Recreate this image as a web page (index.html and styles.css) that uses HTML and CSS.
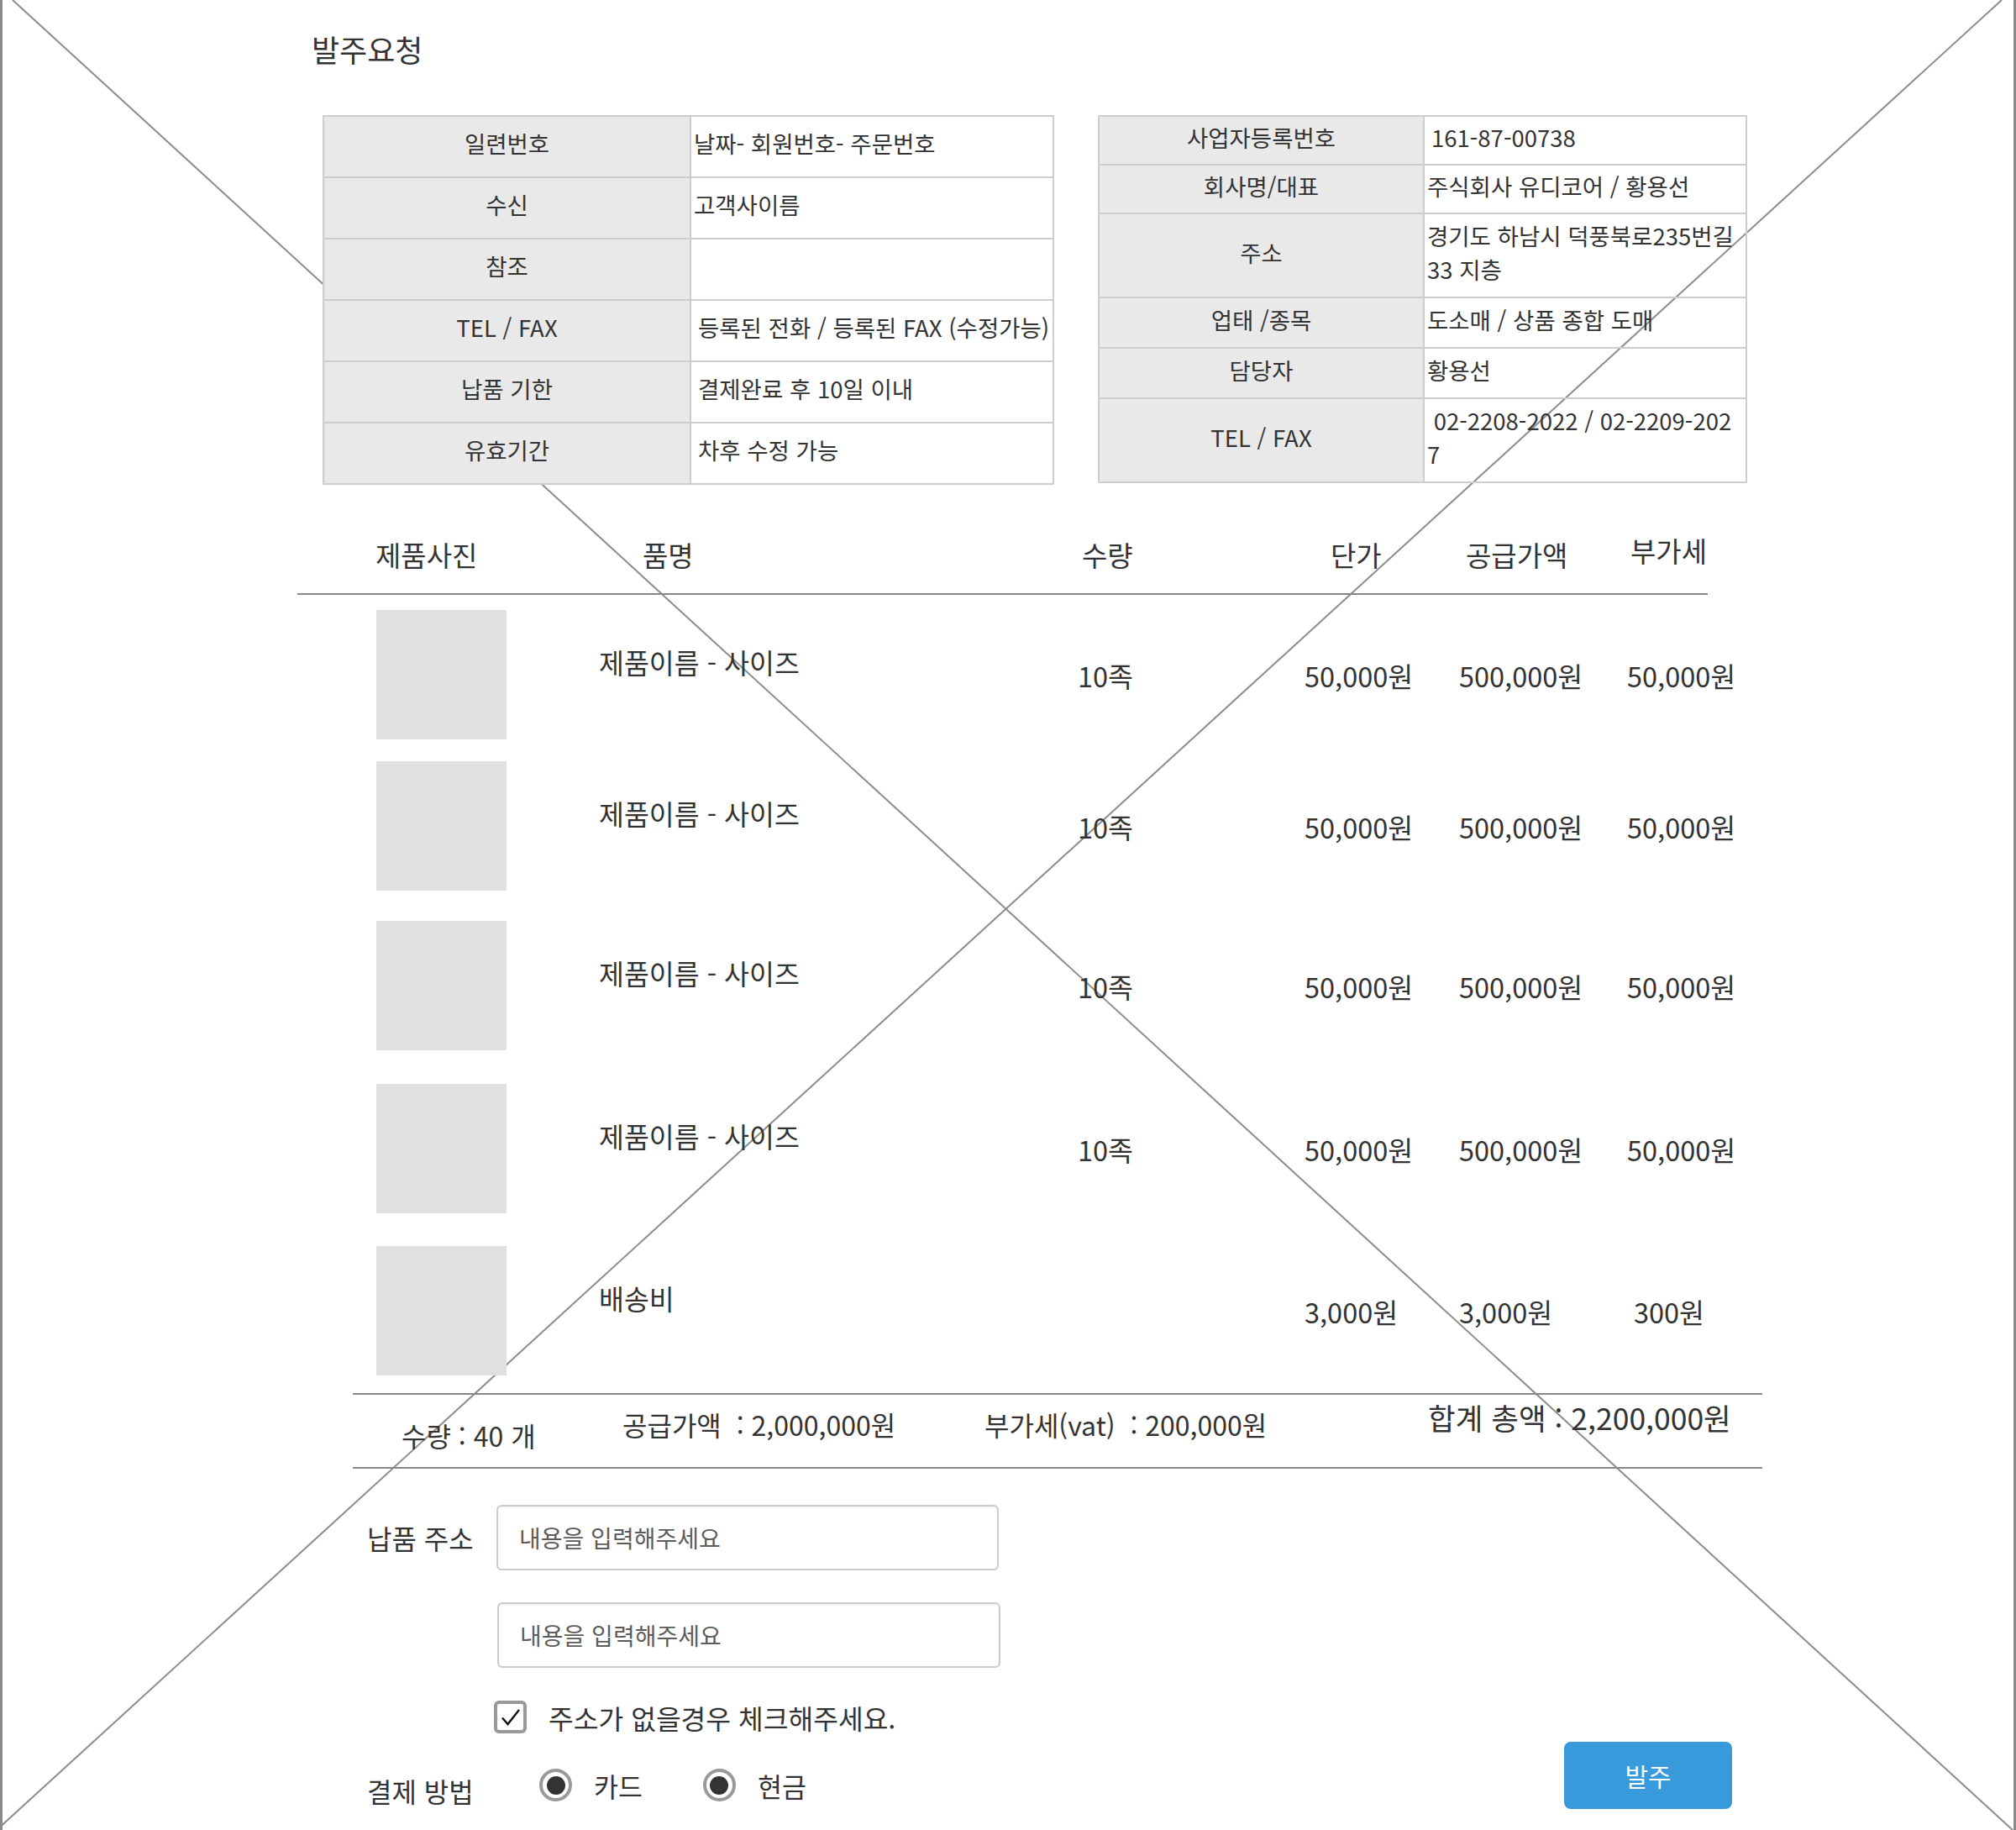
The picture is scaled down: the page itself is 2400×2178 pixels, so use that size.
FILE: index.html
```html
<!DOCTYPE html>
<html lang="ko">
<head>
<meta charset="utf-8">
<title>발주요청</title>
<link rel="stylesheet" href="styles.css">
</head>
<body>
<div class="page">
  <svg class="xmark" width="2400" height="2178" viewBox="0 0 2400 2178" aria-hidden="true">
    <line x1="15" y1="0" x2="2396" y2="2178"/>
    <line x1="2383" y1="0" x2="-4" y2="2178"/>
  </svg>
  <main class="content">
    <h1 class="title">발주요청</h1>

    <section class="info">
      <div class="info-table info-left">
        <div class="th">일련번호</div><div class="td">날짜- 회원번호- 주문번호</div>
        <div class="th">수신</div><div class="td">고객사이름</div>
        <div class="th">참조</div><div class="td"></div>
        <div class="th">TEL / FAX</div><div class="td sp">등록된 전화 / 등록된 FAX (수정가능)</div>
        <div class="th">납품 기한</div><div class="td sp">결제완료 후 10일 이내</div>
        <div class="th">유효기간</div><div class="td sp">차후 수정 가능</div>
      </div>
      <div class="info-table info-right">
        <div class="th">사업자등록번호</div><div class="td sp">161-87-00738</div>
        <div class="th">회사명/대표</div><div class="td">주식회사 유디코어 / 황용선</div>
        <div class="th">주소</div><div class="td">경기도 하남시 덕풍북로235번길 33 지층</div>
        <div class="th">업태 /종목</div><div class="td">도소매 / 상품 종합 도매</div>
        <div class="th">담당자</div><div class="td">황용선</div>
        <div class="th">TEL / FAX</div><div class="td wrap">&nbsp;02-2208-2022 / 02-2209-2027</div>
      </div>
    </section>

    <section class="products">
      <div class="prod-head">
        <div>제품사진</div>
        <div>품명</div>
        <div>수량</div>
        <div>단가</div>
        <div>공급가액</div>
        <div class="head-vat">부가세</div>
      </div>
      <div class="prod-row">
        <div class="thumb"></div>
        <div class="name">제품이름 - 사이즈</div>
        <div>10족</div>
        <div>50,000원</div>
        <div>500,000원</div>
        <div>50,000원</div>
      </div>
      <div class="prod-row">
        <div class="thumb"></div>
        <div class="name">제품이름 - 사이즈</div>
        <div>10족</div>
        <div>50,000원</div>
        <div>500,000원</div>
        <div>50,000원</div>
      </div>
      <div class="prod-row">
        <div class="thumb"></div>
        <div class="name">제품이름 - 사이즈</div>
        <div>10족</div>
        <div>50,000원</div>
        <div>500,000원</div>
        <div>50,000원</div>
      </div>
      <div class="prod-row">
        <div class="thumb"></div>
        <div class="name">제품이름 - 사이즈</div>
        <div>10족</div>
        <div>50,000원</div>
        <div>500,000원</div>
        <div>50,000원</div>
      </div>
      <div class="prod-row">
        <div class="thumb"></div>
        <div class="name">배송비</div>
        <div></div>
        <div>3,000원</div>
        <div>3,000원</div>
        <div class="indent">300원</div>
      </div>
    </section>

    <section class="summary">
      <div class="sum-qty">수량 : 40 개</div>
      <div class="sum-mid">공급가액&nbsp; : 2,000,000원</div>
      <div class="sum-mid">부가세(vat)&nbsp; : 200,000원</div>
      <div class="sum-total">합계 총액 : 2,200,000원</div>
    </section>

    <section class="order">
      <form class="order-form" onsubmit="return false">
        <div class="form-row">
          <span class="form-label">납품 주소</span>
          <input class="field" type="text" placeholder="내용을 입력해주세요">
        </div>
        <div class="form-row row-addr2">
          <span class="form-label"></span>
          <input class="field field-2" type="text" placeholder="내용을 입력해주세요">
        </div>
        <div class="form-row row-check">
          <span class="form-label"></span>
          <label class="check">
            <span class="check-box">
              <svg width="24" height="22" viewBox="0 0 24 22" aria-hidden="true"><path d="M2 11.5 L8.5 19 L22 2"/></svg>
            </span>
            주소가 없을경우 체크해주세요.
          </label>
        </div>
        <div class="form-row row-pay">
          <span class="form-label label-pay">결제 방법</span>
          <label class="radio first"><span class="radio-dot"></span>카드</label>
          <label class="radio"><span class="radio-dot"></span>현금</label>
        </div>
      </form>
      <button class="submit" type="button">발주</button>
    </section>
  </main>
</div>
</body>
</html>
```

FILE: styles.css
```css
* {
  box-sizing: border-box;
}

html, body {
  margin: 0;
  padding: 0;
  background: #fff;
}

body {
  font-family: "Noto Sans CJK KR", "Noto Sans", sans-serif;
  color: #333;
}

.page {
  position: relative;
  width: 2400px;
  height: 2178px;
  overflow: hidden;
  background: #fff;
  box-shadow: inset 3px 0 0 #8a8a8a, inset -3px 0 0 #8a8a8a;
}

.xmark {
  position: absolute;
  left: 0;
  top: 0;
}

.xmark line {
  stroke: #8c8c8c;
  stroke-width: 2;
}

.content {
  position: relative;
  padding-top: 40px;
}

.title {
  margin: 0 0 0 371px;
  font-size: 36px;
  font-weight: 400;
  line-height: 36px;
}

/* info tables */
.info {
  display: flex;
  align-items: flex-start;
  gap: 52px;
  margin: 61px 0 0 384px;
}

.info-table {
  display: grid;
  border-top: 2px solid #cdcdcd;
  border-left: 2px solid #cdcdcd;
  font-size: 27.5px;
}

.info-left {
  grid-template-columns: 437px 432px;
  grid-template-rows: repeat(6, 73px);
}

.info-right {
  grid-template-columns: 387px 384px;
  grid-template-rows: 58px 58px 100px 60px 60px 100px;
}

.th,
.td {
  display: flex;
  align-items: center;
  border-right: 2px solid #cdcdcd;
  border-bottom: 2px solid #cdcdcd;
}

.info-left .th,
.info-left .td {
  padding-bottom: 10px;
}

.info-right .th,
.info-right .td {
  padding-bottom: 8px;
}

.th {
  justify-content: center;
  background: #e9e9e9;
}

.td {
  padding-left: 3px;
  line-height: 40px;
}

.td.sp {
  padding-left: 8px;
}

.td.wrap {
  padding-right: 14px;
  word-break: break-all;
}

/* products */
.prod-head {
  display: grid;
  grid-template-columns: 318px 523px 296px 161px 196px auto;
  align-items: center;
  width: 1679px;
  height: 88px;
  margin: 43px 0 0 354px;
  padding-left: 93px;
  padding-bottom: 6px;
  border-bottom: 2px solid #888;
  font-size: 33px;
  white-space: nowrap;
}

.head-vat {
  margin-bottom: 10px;
}

.prod-row {
  display: grid;
  grid-template-columns: 265px 570px 270px 184px 200px auto;
  align-items: center;
  height: 154px;
  margin-left: 448px;
  font-size: 32.5px;
  white-space: nowrap;
}

.prod-row:nth-child(2) { margin-top: 18px; }
.prod-row:nth-child(3) { margin-top: 26px; }
.prod-row:nth-child(4) { margin-top: 36px; }
.prod-row:nth-child(5) { margin-top: 40px; }
.prod-row:nth-child(6) { margin-top: 39px; }

.thumb {
  width: 155px;
  height: 154px;
  background: #e0e0e0;
}

.name {
  padding-bottom: 32px;
}

.indent {
  padding-left: 8px;
}

/* summary */
.summary {
  display: grid;
  grid-template-columns: 263px 431px 528px auto;
  align-items: start;
  width: 1678px;
  height: 90px;
  margin: 21px 0 0 420px;
  padding-left: 58px;
  border-top: 2px solid #888;
  border-bottom: 2px solid #888;
  font-size: 32px;
  line-height: 40px;
  white-space: nowrap;
}

.sum-qty {
  padding-top: 28px;
}

.sum-mid {
  padding-top: 15px;
}

.sum-total {
  padding-top: 7px;
  font-size: 35.5px;
}

/* order form */
.order {
  display: flex;
  align-items: flex-end;
  width: 1625px;
  margin: 43px 0 0 437px;
}

.order-form {
  margin: 0;
}

.form-row {
  display: flex;
  align-items: center;
}

.row-addr2 { margin-top: 38px; }
.row-check { margin-top: 39px; height: 39px; }
.row-pay { margin-top: 42px; height: 39px; }

.form-label {
  flex: 0 0 154px;
  font-size: 32px;
}

.label-pay {
  margin-top: 12px;
}

.field {
  width: 598px;
  height: 78px;
  padding: 0 0 0 25px;
  border: 2px solid #cbcbcb;
  border-radius: 6px;
  box-shadow: inset 0 2px 2px rgba(0, 0, 0, 0.05);
  font-family: "Noto Sans CJK KR", "Noto Sans", sans-serif;
  font-size: 28px;
  color: #333;
  outline: none;
}

.field-2 {
  width: 599px;
  margin-left: 1px;
}

.field::placeholder {
  color: #5c5c5c;
}

.check {
  display: flex;
  align-items: center;
  gap: 26px;
  margin-left: -3px;
  font-size: 32.3px;
}

.check-box {
  display: flex;
  align-items: center;
  justify-content: center;
  width: 39px;
  height: 39px;
  border: 4px solid #999;
  border-radius: 6px;
  background: #fff;
}

.check-box path {
  fill: none;
  stroke: #111;
  stroke-width: 2.4;
}

.radio {
  display: flex;
  align-items: center;
  gap: 26px;
  margin-left: 72px;
  font-size: 31.5px;
}

.radio.first {
  margin-left: 51px;
}

.radio-dot {
  display: flex;
  align-items: center;
  justify-content: center;
  width: 39px;
  height: 39px;
  border: 4px solid #999;
  border-radius: 50%;
  background: #fff;
}

.radio-dot::after {
  content: "";
  width: 22px;
  height: 22px;
  border-radius: 50%;
  background: #333;
}

.submit {
  width: 200px;
  height: 80px;
  margin: 0 0 -9px auto;
  border: 0;
  border-radius: 8px;
  background: #3899db;
  color: #fff;
  font-family: "Noto Sans CJK KR", "Noto Sans", sans-serif;
  font-size: 30px;
}
```
